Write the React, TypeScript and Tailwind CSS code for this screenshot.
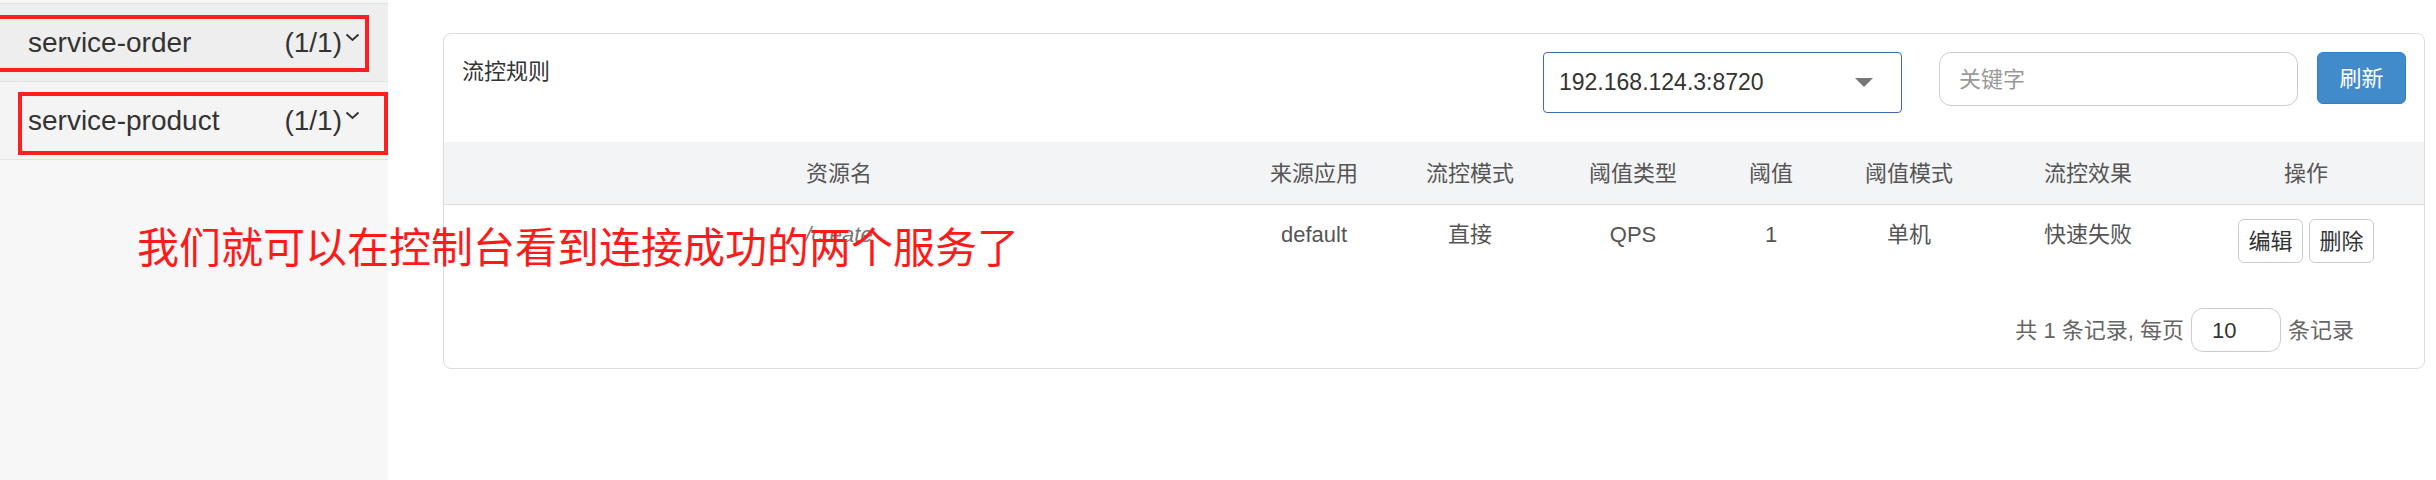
const cols = [
  { label: "资源名", w: "w-[790px]" },
  { label: "来源应用", w: "w-[160px]" },
  { label: "流控模式", w: "w-[152px]" },
  { label: "阈值类型", w: "w-[174px]" },
  { label: "阈值", w: "w-[102px]" },
  { label: "阈值模式", w: "w-[174px]" },
  { label: "流控效果", w: "w-[184px]" },
  { label: "操作", w: "w-[244px] pl-[8px]" },
];

const row = ["/create", "default", "直接", "QPS", "1", "单机", "快速失败"];

function Chevron() {
  return (
    <svg width="15" height="9" viewBox="0 0 15 9" className="ml-[3px] -mt-[10px]">
      <path d="M1.5 1.5 L7.5 7 L13.5 1.5" fill="none" stroke="#333" strokeWidth="2" />
    </svg>
  );
}

function SideItem({ name, bg }: { name: string; bg: string }) {
  return (
    <div className={`h-[78px] flex items-center pl-[28px] pr-[28px] border-b border-[#e2e2e2] ${bg}`}>
      <span className="text-[28px] text-[#333]">{name}</span>
      <span className="ml-auto text-[28px] text-[#333]">(1/1)</span>
      <Chevron />
    </div>
  );
}

export default function App() {
  return (
    <div
      className="relative flex w-[2436px] h-[480px] bg-white overflow-hidden"
      style={{ fontFamily: '"Liberation Sans", "Noto Sans CJK SC", sans-serif' }}
    >
      {/* Sidebar */}
      <div className="w-[388px] h-full bg-[#f7f7f7] pt-[3px]">
        <div className="border-t border-[#e2e2e2]">
          <SideItem name="service-order" bg="bg-[#eeeeee]" />
          <SideItem name="service-product" bg="bg-[#f4f4f4]" />
        </div>
      </div>

      {/* Main */}
      <div className="flex-1 pl-[55px] pt-[33px] pr-[11px]">
        <div className="border border-[#dddddd] rounded-lg h-[336px] flex flex-col">
          {/* Toolbar */}
          <div className="h-[108px] flex items-start pt-[18px] pl-[18px] pr-[18px]">
            <div className="mt-[3px] text-[22px] text-[#333]">流控规则</div>
            <div className="ml-auto w-[359px] h-[61px] border border-[#3b6db3] rounded-[4px] flex items-center pl-[15px] pr-[28px]">
              <span className="text-[23px] text-[#333]">192.168.124.3:8720</span>
              <svg width="18" height="9" viewBox="0 0 18 9" className="ml-auto">
                <path d="M0 0 L18 0 L9 9 Z" fill="#777" />
              </svg>
            </div>
            <div className="ml-[37px] w-[359px] h-[54px] border border-[#cccccc] rounded-xl flex items-center pl-[19px]">
              <span className="text-[22px] text-[#999]">关键字</span>
            </div>
            <div className="ml-[19px] w-[89px] h-[52px] bg-[#428bca] border border-[#357ebd] rounded-md flex items-center justify-center">
              <span className="text-[22px] text-white">刷新</span>
            </div>
          </div>

          {/* Header */}
          <div className="h-[63px] bg-[#f3f4f6] border-b border-[#dddddd] flex items-center">
            {cols.map((c) => (
              <div key={c.label} className={`${c.w} text-center text-[22px] text-[#555]`}>
                {c.label}
              </div>
            ))}
          </div>

          {/* Row */}
          <div className="h-[88px] flex items-start pt-[13px]">
            {row.map((v, i) => (
              <div
                key={i}
                className={`${cols[i].w} text-center text-[22px] text-[#555] ${i === 0 ? "italic text-[#777]" : ""}`}
              >
                {v}
              </div>
            ))}
            <div className={`${cols[7].w} flex justify-center gap-[6px] mt-[1px]`}>
              <div className="w-[65px] h-[44px] border border-[#cccccc] rounded-md flex items-center justify-center text-[22px] text-[#333]">
                编辑
              </div>
              <div className="w-[65px] h-[44px] border border-[#cccccc] rounded-md flex items-center justify-center text-[22px] text-[#333]">
                删除
              </div>
            </div>
          </div>

          {/* Pagination */}
          <div className="mt-[15px] flex items-center justify-end pr-[70px] text-[22px] text-[#666]">
            <span>共 1 条记录, 每页</span>
            <div className="ml-[7px] w-[90px] h-[44px] border border-[#cccccc] rounded-xl flex items-center pl-[20px] text-[#333]">
              10
            </div>
            <span className="ml-[7px]">条记录</span>
          </div>
        </div>
      </div>

      {/* Annotation overlays */}
      <div className="absolute left-[-6px] top-[15px] w-[375px] h-[57px] border-4 border-[#ff1f1f]" />
      <div className="absolute left-[18px] top-[92px] w-[370px] h-[63px] border-4 border-[#ff1f1f]" />
      <div className="absolute left-[137px] top-[224px] text-[42px] leading-[50px] text-[#ff1a1a] whitespace-nowrap">
        我们就可以在控制台看到连接成功的两个服务了
      </div>
    </div>
  );
}
